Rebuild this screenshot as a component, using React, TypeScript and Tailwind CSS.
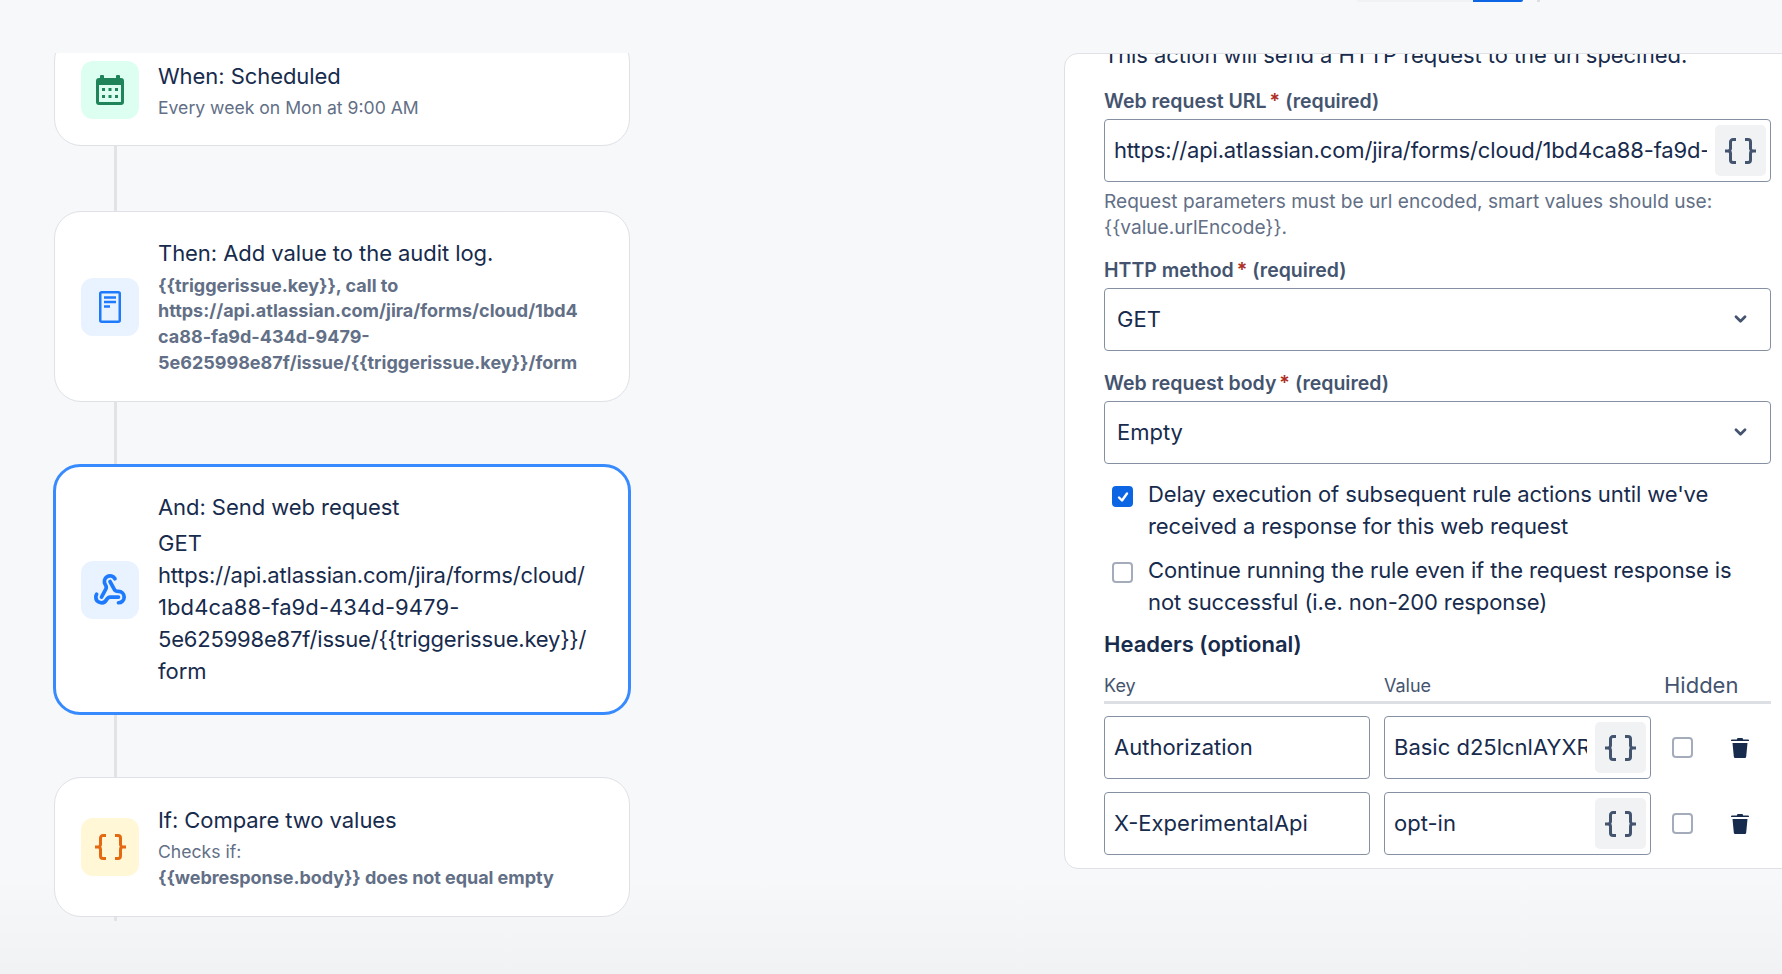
import type { ReactNode } from "react";
import { Webhook } from "lucide-react";

const Braces = ({ className }: { className?: string }) => (
  <svg viewBox="0 0 31 26" fill="none" stroke="currentColor" strokeWidth="3" className={className}>
    <path d="M0 13h3a2.500 2.500 0 0 0 2.500-2.500V4A2.500 2.500 0 0 1 8 1.500h3M3 13a2.500 2.500 0 0 1 2.500 2.500V22A2.500 2.500 0 0 0 8 24.500h3" />
    <path d="M31 13h-3a2.500 2.500 0 0 1-2.500-2.500V4A2.500 2.500 0 0 0 23 1.500h-3M28 13a2.500 2.500 0 0 0-2.500 2.500V22a2.500 2.500 0 0 1-2.500 2.500h-3" />
  </svg>
);

const CalendarIcon = () => (
  <svg viewBox="0 0 28 30" className="w-[28px] h-[30px] text-[#1f845a]">
    <path
      fill="currentColor"
      fillRule="evenodd"
      d="M5 0h2a1 1 0 0 1 1 1v2h12V1a1 1 0 0 1 1-1h2a1 1 0 0 1 1 1v2h1a3 3 0 0 1 3 3v21a3 3 0 0 1-3 3H3a3 3 0 0 1-3-3V6a3 3 0 0 1 3-3h1V1a1 1 0 0 1 1-1ZM3 10v16a1 1 0 0 0 1 1h20a1 1 0 0 0 1-1V10H3Z"
    />
    <path fill="#dcfff1" d="M3 10h22v16a1 1 0 0 1-1 1H4a1 1 0 0 1-1-1Z" />
    <path
      fill="currentColor"
      d="M6 13h3v3H6zM12.500 13h3v3h-3zM19 13h3v3h-3zM6 20h3v3H6zM12.500 20h3v3h-3zM19 20h3v3h-3z"
    />
  </svg>
);

const DocIcon = () => (
  <svg viewBox="0 0 22 32" fill="none" className="w-[22px] h-[32px] text-[#1d7afc]">
    <rect x="1.250" y="1.250" width="19.500" height="29.500" rx="1.500" stroke="currentColor" strokeWidth="2.500" />
    <path d="M5 6.500h12M5 11h12M5 15.500h6" stroke="currentColor" strokeWidth="2.500" />
  </svg>
);

const TrashIcon = () => (
  <svg viewBox="0 0 18 20" className="w-[18px] h-[20px] text-[#172b4d]">
    <path
      fill="currentColor"
      d="M6.500 0h5l.7 1.500H17a1 1 0 0 1 1 1V3H0v-.5a1 1 0 0 1 1-1h4.800L6.500 0ZM1.500 5h15l-1.300 13.500a1.500 1.500 0 0 1-1.500 1.500H4.300a1.500 1.500 0 0 1-1.500-1.500L1.500 5Z"
    />
  </svg>
);

const Chevron = () => (
  <svg viewBox="0 0 14 10" fill="none" className="w-[13px] h-[9px] text-[#44546f]">
    <path d="M2 2l5 5 5-5" stroke="currentColor" strokeWidth="3" strokeLinecap="round" strokeLinejoin="round" />
  </svg>
);

const Connector = ({ className }: { className: string }) => (
  <div className={`ml-[61px] w-[3px] bg-[#e2e3e7] ${className}`} />
);

type FlowCardProps = {
  tile: string;
  icon: ReactNode;
  title: string;
  children: ReactNode;
  className: string;
};

const FlowCard = ({ tile, icon, title, children, className }: FlowCardProps) => (
  <div className={`flex items-center bg-white rounded-[27px] ${className}`}>
    <div className={`w-[58px] h-[58px] rounded-[12px] flex items-center justify-center shrink-0 ${tile}`}>{icon}</div>
    <div className="ml-[19px] min-w-0">
      <div className="text-[22px] leading-[32px] tracking-[-0.06px] text-[#172b4d]">{title}</div>
      {children}
    </div>
  </div>
);

const Label = ({ text }: { text: string }) => (
  <div className="text-[19.5px] leading-[24px] font-semibold text-[#44546f]">
    {text}
    <span className="text-[#ae2e24] ml-[3px]">*</span>
    <span className="ml-[5px]">(required)</span>
  </div>
);

const SelectBox = ({ value }: { value: string }) => (
  <div className="mt-[6px] h-[63px] border border-[#8590a2] rounded-[4px] flex items-center justify-between pl-[12px] pr-[23px] text-[22px] text-[#172b4d]">
    <span>{value}</span>
    <Chevron />
  </div>
);

const TextBox = ({ value, button, className }: { value: string; button?: boolean; className?: string }) => (
  <div className={`h-[63px] border border-[#8590a2] rounded-[4px] flex items-center justify-between pl-[9px] pr-[4px] bg-white text-[22px] text-[#172b4d] ${className ?? ""}`}>
    <div className="min-w-0 flex-1 overflow-hidden whitespace-nowrap">{value}</div>
    {button && (
      <div className="ml-[8px] w-[51px] h-[51px] shrink-0 rounded-[5px] bg-[#f1f2f4] flex items-center justify-center text-[#44546f]">
        <Braces className="w-[31px] h-[26px]" />
      </div>
    )}
  </div>
);

const CheckOption = ({ checked, lines }: { checked?: boolean; lines: string[] }) => (
  <div className="flex pl-[8px]">
    <div
      className={`mt-[8px] w-[21px] h-[21px] shrink-0 rounded-[4px] flex items-center justify-center ${
        checked ? "bg-[#0c66e4]" : "border-2 border-[#a4acbc] bg-white"
      }`}
    >
      {checked && (
        <svg viewBox="0 0 14 14" fill="none" className="w-[14px] h-[14px]">
          <path d="M3 7.500l3 3 5-7" stroke="white" strokeWidth="2.400" strokeLinecap="round" strokeLinejoin="round" />
        </svg>
      )}
    </div>
    <div className="ml-[15px] text-[22px] leading-[32px] tracking-[-0.11px] text-[#172b4d]">
      {lines.map((line) => (
        <div key={line}>{line}</div>
      ))}
    </div>
  </div>
);

const HeaderRow = ({ name, value }: { name: string; value: string }) => (
  <div className="flex items-center">
    <TextBox value={name} className="w-[266px] shrink-0" />
    <TextBox value={value} button className="ml-[14px] w-[267px] shrink-0" />
    <div className="ml-[21px] w-[21px] h-[21px] rounded-[4px] border-2 border-[#a4acbc] bg-white" />
    <div className="ml-[38px] flex">
      <TrashIcon />
    </div>
  </div>
);

const auditLines = [
  "{{triggerissue.key}}, call to",
  "https://api.atlassian.com/jira/forms/cloud/1bd4",
  "ca88-fa9d-434d-9479-",
  "5e625998e87f/issue/{{triggerissue.key}}/form",
];

const requestLines = [
  { text: "GET", tracking: "" },
  { text: "https://api.atlassian.com/jira/forms/cloud/", tracking: "tracking-[-0.19px]" },
  { text: "1bd4ca88-fa9d-434d-9479-", tracking: "tracking-[0.08px]" },
  { text: "5e625998e87f/issue/{{triggerissue.key}}/", tracking: "tracking-[-0.2px]" },
  { text: "form", tracking: "" },
];

export default function App() {
  return (
    <div className="w-[1782px] h-[974px] overflow-hidden bg-gradient-to-b from-[#f7f8f9] from-[90%] to-[#f1f2f4] font-['Inter',sans-serif]">
      <div className="h-[2px] pl-[1357px] flex">
        <div className="w-[116px] bg-[#f1f2f4]" />
        <div className="w-[50px] bg-[#0c66e4] rounded-br-[2px]" />
        <div className="ml-[14px] w-[3px] bg-[#dcdfe4]" />
      </div>
      <div className="flex items-start mt-[51px] pl-[53px]">
        <div className="w-[578px] h-[880px] overflow-hidden shrink-0">
          <FlowCard
            tile="bg-[#dcfff1]"
            icon={<CalendarIcon />}
            title="When: Scheduled"
            className="ml-[1px] w-[576px] pl-[26px] border border-[#dfe1e6] h-[112px] mt-[-19px]"
          >
            <div className="text-[17.6px] leading-[24px] mt-[4px] text-[#626f86]">Every week on Mon at 9:00 AM</div>
          </FlowCard>
          <Connector className="h-[65px]" />
          <FlowCard
            tile="bg-[#e9f2ff]"
            icon={<DocIcon />}
            title="Then: Add value to the audit log."
            className="ml-[1px] w-[576px] pl-[26px] border border-[#dfe1e6] h-[191px]"
          >
            <div className="mt-[4px] pb-[1px] text-[18px] leading-[25.7px] font-bold text-[#626f86]">
              {auditLines.map((line) => (
                <div key={line}>{line}</div>
              ))}
            </div>
          </FlowCard>
          <Connector className="h-[62px]" />
          <FlowCard
            tile="bg-[#e9f2ff]"
            icon={<Webhook size={34} strokeWidth={2.6} className="text-[#1d7afc]" />}
            title="And: Send web request"
            className="border-[3px] border-[#388bff] h-[251px] pl-[25px] w-[578px]"
          >
            <div className="mt-[4px] pb-[2px] text-[22px] leading-[32px] text-[#172b4d]">
              {requestLines.map((line) => (
                <div key={line.text} className={line.tracking}>
                  {line.text}
                </div>
              ))}
            </div>
          </FlowCard>
          <Connector className="h-[62px]" />
          <FlowCard
            tile="bg-[#fff7d6]"
            icon={<Braces className="w-[31px] h-[26px] text-[#e56910]" />}
            title="If: Compare two values"
            className="ml-[1px] w-[576px] pl-[26px] border border-[#dfe1e6] h-[140px]"
          >
            <div className="mt-[3px] text-[17.6px] leading-[26px] text-[#626f86]">Checks if:</div>
            <div className="text-[18px] leading-[26px] font-bold tracking-[-0.05px] text-[#626f86]">{"{{webresponse.body}} does not equal empty"}</div>
          </FlowCard>
          <Connector className="h-[4px]" />
        </div>
        <div className="ml-[433px] w-[800px] h-[816px] shrink-0 bg-white border border-[#dfe1e6] rounded-tl-[14px] rounded-bl-[14px] pl-[39px] overflow-hidden">
          <div className="w-[667px]">
            <div className="mt-[-15px] text-[22px] leading-[32px] tracking-[-0.06px] text-[#172b4d]">This action will send a HTTP request to the url specified.</div>
            <div className="mt-[18px]">
              <Label text="Web request URL" />
            </div>
            <TextBox
              value="https://api.atlassian.com/jira/forms/cloud/1bd4ca88-fa9d-434d-9479-5e625998e87f/issue/{{triggerissue.key}}/form"
              button
              className="mt-[6px] tracking-[-0.15px]"
            />
            <div className="mt-[6px] text-[19.1px] leading-[26px] text-[#626f86]">
              <div>Request parameters must be url encoded, smart values should use:</div>
              <div>{"{{value.urlEncode}}."}</div>
            </div>
            <div className="mt-[18px]">
              <Label text="HTTP method" />
            </div>
            <SelectBox value="GET" />
            <div className="mt-[20px]">
              <Label text="Web request body" />
            </div>
            <SelectBox value="Empty" />
            <div className="mt-[14px]">
              <CheckOption checked lines={["Delay execution of subsequent rule actions until we've", "received a response for this web request"]} />
            </div>
            <div className="mt-[12px]">
              <CheckOption lines={["Continue running the rule even if the request response is", "not successful (i.e. non-200 response)"]} />
            </div>
            <div className="mt-[10px] text-[22px] leading-[32px] font-semibold text-[#172b4d]">Headers (optional)</div>
            <div className="mt-[9px] flex items-center h-[32px] border-b-[3px] border-[#dcdfe4] box-content">
              <div className="w-[280px] text-[18px] text-[#44546f]">Key</div>
              <div className="w-[280px] text-[18px] text-[#44546f]">Value</div>
              <div className="text-[22px] text-[#44546f]">Hidden</div>
            </div>
            <div className="mt-[12px] flex flex-col gap-[13px]">
              <HeaderRow name="Authorization" value="Basic d25lcnlAYXR" />
              <HeaderRow name="X-ExperimentalApi" value="opt-in" />
            </div>
          </div>
        </div>
      </div>
    </div>
  );
}
